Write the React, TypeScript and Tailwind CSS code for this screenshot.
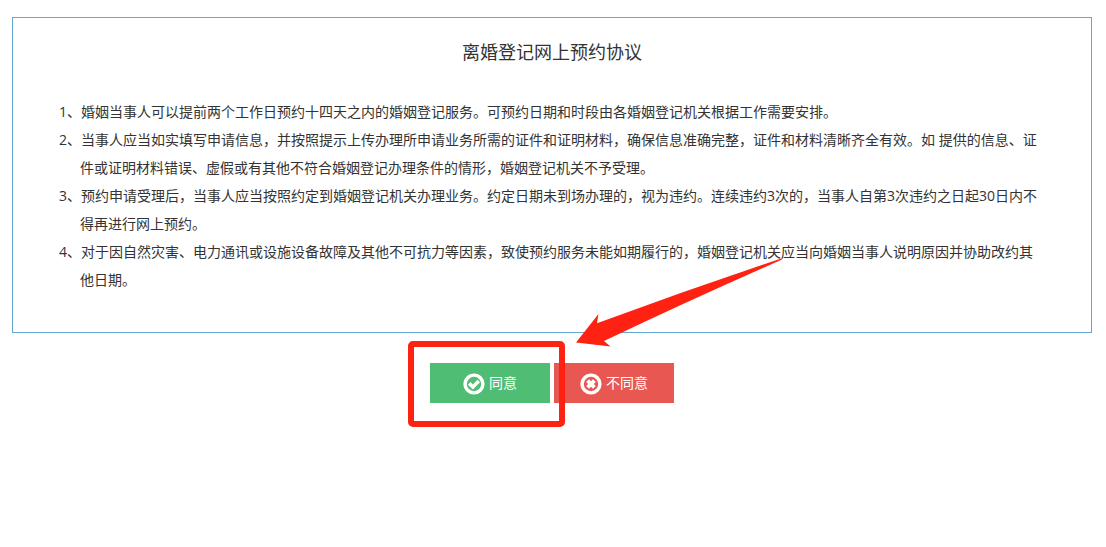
const clauses: string[] = [
  '1、婚姻当事人可以提前两个工作日预约十四天之内的婚姻登记服务。可预约日期和时段由各婚姻登记机关根据工作需要安排。',
  '2、当事人应当如实填写申请信息，并按照提示上传办理所申请业务所需的证件和证明材料，确保信息准确完整，证件和材料清晰齐全有效。如 提供的信息、证件或证明材料错误、虚假或有其他不符合婚姻登记办理条件的情形，婚姻登记机关不予受理。',
  '3、预约申请受理后，当事人应当按照约定到婚姻登记机关办理业务。约定日期未到场办理的，视为违约。连续违约3次的，当事人自第3次违约之日起30日内不得再进行网上预约。',
  '4、对于因自然灾害、电力通讯或设施设备故障及其他不可抗力等因素，致使预约服务未能如期履行的，婚姻登记机关应当向婚姻当事人说明原因并协助改约其他日期。',
];

function OkCircleIcon() {
  return (
    <svg className="mt-px size-[22px]" viewBox="0 0 22 22" fill="none" aria-hidden="true">
      <circle cx="11" cy="11" r="8.9" stroke="currentColor" strokeWidth="3.4" />
      <path d="M6.2 10.4 9.9 14 15.8 8.1" stroke="currentColor" strokeWidth="3.6" />
    </svg>
  );
}

function RemoveCircleIcon() {
  return (
    <svg className="mt-px size-[22px]" viewBox="0 0 22 22" fill="none" aria-hidden="true">
      <circle cx="11" cy="11" r="8.9" stroke="currentColor" strokeWidth="3.4" />
      <path d="M7.6 7.6 14.4 14.4M14.4 7.6 7.6 14.4" stroke="currentColor" strokeWidth="4" />
    </svg>
  );
}

function Pointer() {
  return (
    <svg
      className="pointer-events-none absolute -top-[105px] left-[145px] h-[90px] w-[210px]"
      viewBox="575 258 210 90"
      aria-hidden="true"
    >
      <path
        d="M576 342.6 598.5 314 597 323.3Q690 289 782 258.3Q783 259 781 260Q690 300 604 341L610.5 346.5Z"
        fill="#ff2212"
      />
    </svg>
  );
}

export default function App() {
  return (
    <main className="bg-white pt-[17px] pr-3.5 pb-12 pl-3 font-['Open_Sans','Noto_Sans_CJK_SC',sans-serif] text-sm text-[#333]">
      <section className="border border-[#62a8d1] px-[46px] pt-5 pb-[38px]">
        <h1 className="text-center text-lg leading-7 font-normal">离婚登记网上预约协议</h1>
        <ul className="mt-8 leading-7">
          {clauses.map((clause) => (
            <li key={clause} className="pl-[21px] -indent-[21px]">
              {clause}
            </li>
          ))}
        </ul>
      </section>

      <div className="mt-[30px] flex justify-center">
        <div className="relative flex gap-1">
          <button
            type="button"
            className="flex h-10 w-[120px] items-center justify-center gap-1 bg-[#50bd74] text-white"
          >
            <OkCircleIcon />
            同意
          </button>
          <button
            type="button"
            className="flex h-10 w-[120px] items-center justify-center gap-1 bg-[#e95753] text-white"
          >
            <RemoveCircleIcon />
            不同意
          </button>
          <div className="pointer-events-none absolute -top-[22px] -left-[22px] h-[86px] w-[157px] rounded-[5px] border-[6px] border-[#ff2212]" />
          <Pointer />
        </div>
      </div>
    </main>
  );
}
